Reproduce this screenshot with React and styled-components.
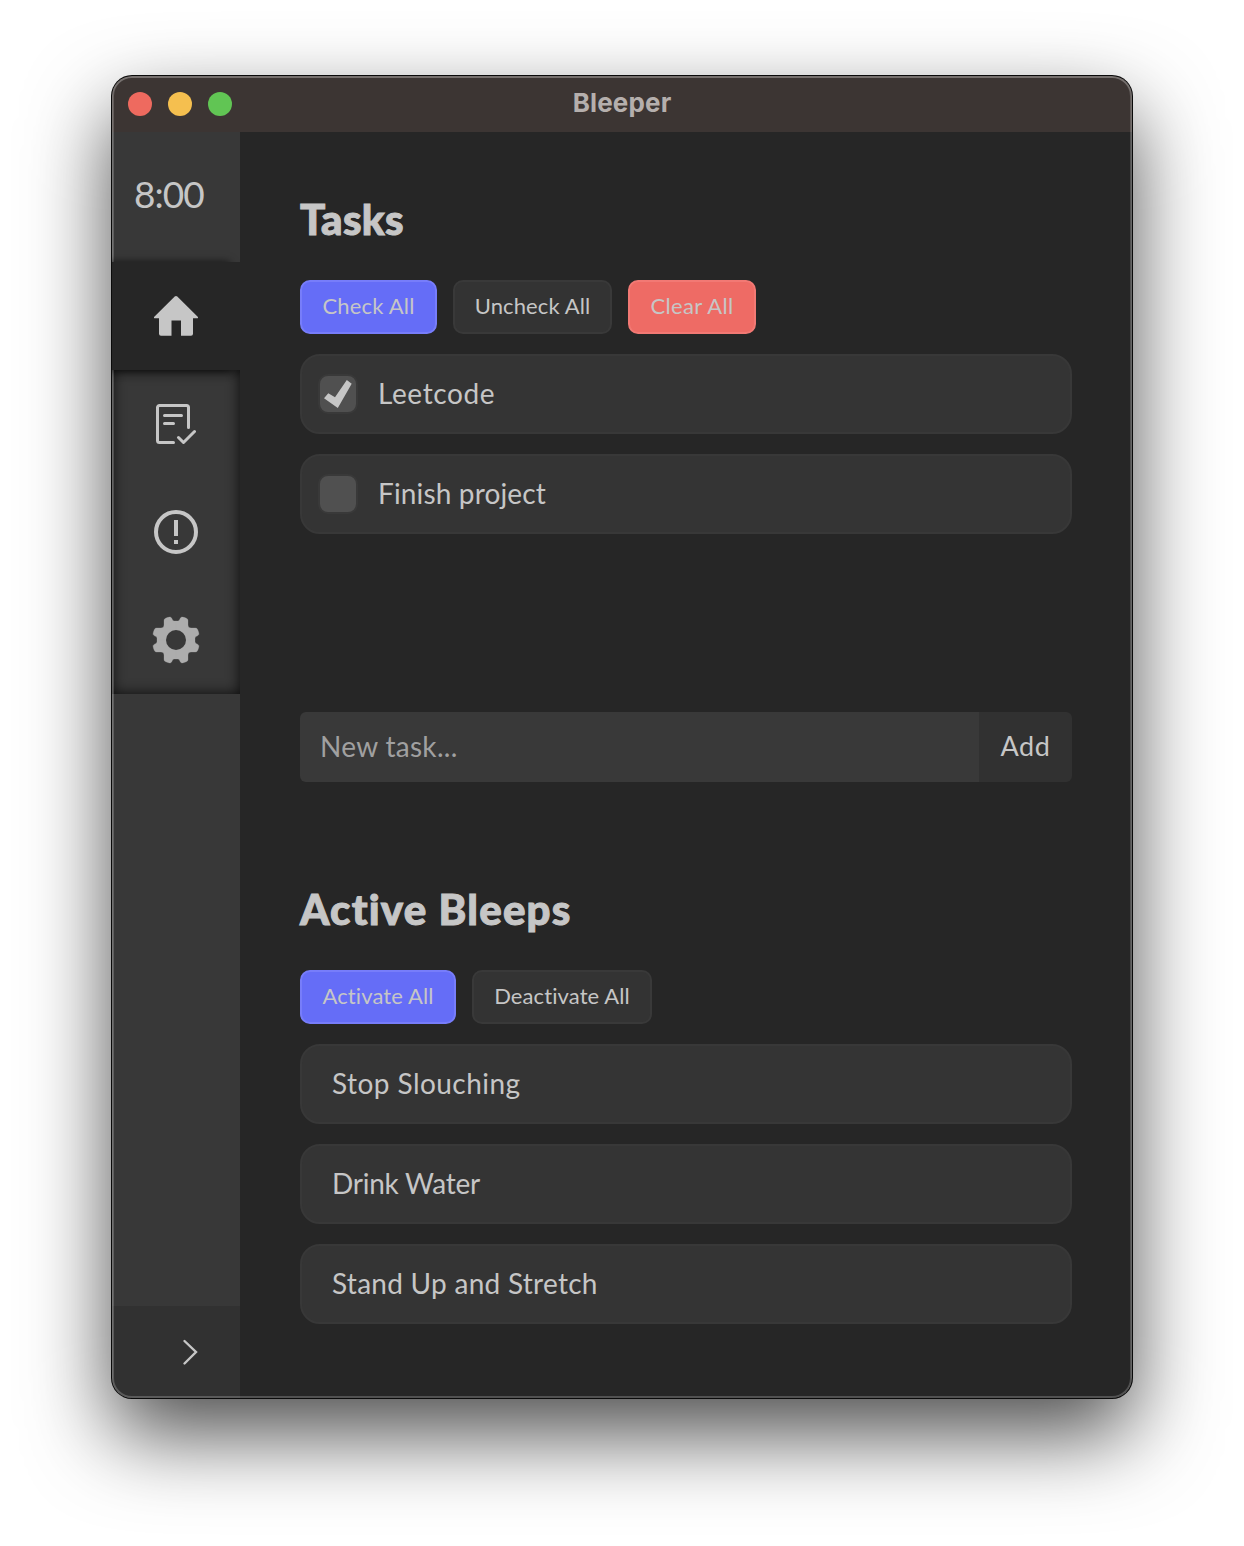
import React from "react";
import styled, { createGlobalStyle, css } from "styled-components";

const GlobalStyle = createGlobalStyle`
  * { box-sizing: border-box; }
  body { margin: 0; background: #fff; font-variant-ligatures: none; }
  button, input { font-family: inherit; font-variant-ligatures: none; }
`;

const Desktop = styled.div`
  width: 1244px;
  height: 1546px;
  padding: 76px 112px 148px;
  overflow: hidden;
  font-family: Lato, "Liberation Sans", sans-serif;
  color: #c6c6c6;
`;

const Window = styled.div`
  position: relative;
  display: flex;
  flex-direction: column;
  height: 1322px;
  border-radius: 20px;
  overflow: hidden;
  background: #262626;
  box-shadow: 0 0 0 1px #0a0a0a, 0 36px 84px rgba(0, 0, 0, 0.7);

  &::after {
    content: "";
    position: absolute;
    inset: 0;
    border-radius: inherit;
    pointer-events: none;
    box-shadow: inset 0 1px 0 1px rgba(255, 255, 255, 0.12),
      inset 0 0 0 2px rgba(255, 255, 255, 0.2);
  }
`;

const TitleBar = styled.header`
  display: grid;
  grid-template-columns: 1fr auto 1fr;
  align-items: center;
  height: 56px;
  padding: 0 16px;
  background: #3c3533;
`;

const Lights = styled.div`
  display: flex;
  gap: 16px;
`;

const Light = styled.span`
  width: 24px;
  height: 24px;
  border-radius: 50%;
  background: ${(p) => p.$color};
`;

const Title = styled.div`
  font: 700 26px/32px Inter, sans-serif;
  letter-spacing: ${(p) => p.$track}px;
  color: #b5afad;
  margin-top: -2px;
`;

const Body = styled.div`
  display: flex;
  flex: 1;
`;

const Sidebar = styled.aside`
  display: flex;
  flex-direction: column;
  width: 128px;
  overflow: hidden;
  background: #383838;
`;

const Clock = styled.div`
  height: 130px;
  padding: 38px 0 0 22px;
  font-size: 37px;
  line-height: 48px;
  letter-spacing: ${(p) => p.$track}px;
`;

const navItem = css`
  display: flex;
  align-items: center;
  justify-content: center;
  width: 128px;
  height: 108px;
  padding: 0;
  border: 0;
  background: none;
`;

const ActiveNavItem = styled.button`
  ${navItem}
  position: relative;
  z-index: 1;
  background: #262626;
  box-shadow: -10px 0 8px rgba(0, 0, 0, 0.65);
`;

const NavItem = styled.button`
  ${navItem}
`;

const NavGroup = styled.nav`
  box-shadow: inset 0 0 14px rgba(0, 0, 0, 0.8);
`;

const Expand = styled.button`
  display: flex;
  align-items: center;
  justify-content: flex-end;
  height: 92px;
  margin-top: auto;
  padding: 0 40px 0 0;
  border: 0;
  background: #313131;
`;

const Icon = styled.svg`
  display: block;
  width: ${(p) => p.$w}px;
  height: ${(p) => p.$h}px;
  color: ${(p) => p.$color || "#c6c6c6"};
`;

const Main = styled.main`
  flex: 1;
  display: flex;
  flex-direction: column;
  gap: 100px;
  padding: 60px 60px 0;
`;

const Section = styled.section`
  display: flex;
  flex-direction: column;
  height: ${(p) => (p.$height ? `${p.$height}px` : "auto")};
`;

const Heading = styled.h1`
  margin: 0;
  height: 88px;
  font-size: 42px;
  font-weight: 900;
  line-height: 54px;
  letter-spacing: ${(p) => p.$track}px;
  -webkit-text-stroke: 1px currentColor;
  white-space: nowrap;
`;

const Actions = styled.div`
  display: flex;
  gap: 16px;
  margin-bottom: 20px;
`;

const tones = {
  primary: ["#656df7", "#777dfa"],
  plain: ["#333333", "#393939"],
  danger: ["#ee6b65", "#f27974"],
};

const ActionButton = styled.button`
  width: ${(p) => p.$width}px;
  height: 54px;
  padding: 0 0 2px;
  border: 2px solid ${(p) => tones[p.$tone][1]};
  border-radius: 10px;
  background: ${(p) => tones[p.$tone][0]};
  color: #c6c6c6;
  font-size: 22px;
  line-height: 28px;
  letter-spacing: ${(p) => p.$track}px;
  white-space: nowrap;
`;

const List = styled.div`
  display: flex;
  flex-direction: column;
  gap: 20px;
`;

const Row = styled.div`
  display: flex;
  align-items: center;
  gap: 20px;
  height: 80px;
  padding-left: ${(p) => (p.$checkable ? 16 : 30)}px;
  border: 2px solid #383838;
  border-radius: 20px;
  background: #343434;
`;

const Label = styled.span`
  font-size: 28px;
  line-height: 36px;
  letter-spacing: ${(p) => p.$track}px;
  margin-bottom: 2px;
`;

const Checkbox = styled.span`
  width: 40px;
  height: 40px;
  border: 2px solid #393939;
  border-radius: 10px;
  background: #505050;
`;

const NewTask = styled.form`
  display: flex;
  height: 70px;
  margin-top: auto;
`;

const TaskInput = styled.input`
  width: 679px;
  padding: 0 20px 2px;
  border: 0;
  border-radius: 6px 0 0 6px;
  background: #393939;
  font-size: 28px;
  letter-spacing: ${(p) => p.$track}px;
  outline: none;

  &::placeholder {
    color: #a0a0a0;
    opacity: 1;
  }
`;

const AddButton = styled.button`
  flex: 1;
  padding: 0 0 3px;
  border: 0;
  border-radius: 0 6px 6px 0;
  background: #313131;
  color: #c6c6c6;
  font-size: 27px;
  letter-spacing: ${(p) => p.$track}px;
`;

const HomeIcon = () => (
  <Icon $w={44} $h={40} viewBox="0 0 44 40">
    <path
      fill="currentColor"
      d="M20.7.6a2 2 0 0 1 2.6 0L43.7 20.8c.6.6.3 1.5-.5 1.5H39v15.400a2 2 0 0 1-2 2H27V24.500H17.500V39.700H7a2 2 0 0 1-2-2V22.300H.8c-.8 0-1.100-.9-.5-1.500z"
    />
  </Icon>
);

const TasksIcon = () => (
  <Icon
    $w={40}
    $h={40}
    viewBox="0 0 40 40"
    fill="none"
    stroke="currentColor"
    strokeWidth="3"
    strokeLinecap="round"
    strokeLinejoin="round"
  >
    <path d="M32.500 23.500V3.500a2 2 0 0 0-2-2h-27a2 2 0 0 0-2 2v33a2 2 0 0 0 2 2h14" />
    <path d="M8.500 11.500h17M8.500 19.500h9M22.500 33.500l5 5L38.500 27.500" />
  </Icon>
);

const AlertIcon = () => (
  <Icon $w={44} $h={44} viewBox="0 0 44 44">
    <circle cx="22" cy="22" r="20" fill="none" stroke="currentColor" strokeWidth="4" />
    <path fill="currentColor" d="M20 10h4v16h-4zM20 30h4v4h-4z" />
  </Icon>
);

const gearQuarter =
  "M0 0V-19H1.800Q3 -19.200 3.400 -20L4.400 -21.900Q5.200 -23.200 6.700 -22.900Q9 -22.400 10.800 -21.500Q12 -20.800 12 -19.500V-15Q12 -12 15 -12H19.500Q20.800 -12 21.500 -10.800Q22.400 -9 22.900 -6.700Q23.200 -5.200 21.900 -4.400L20 -3.400Q19.200 -3 19 -1.800V0Z";

const GearIcon = () => (
  <Icon $w={48} $h={48} $color="#adadad" viewBox="-24 -24 48 48">
    <mask id="gear-hole">
      <rect x="-24" y="-24" width="48" height="48" fill="#fff" />
      <circle r="10" fill="#000" />
    </mask>
    <g fill="currentColor" stroke="currentColor" strokeWidth="0.3" mask="url(#gear-hole)">
      {[0, 90, 180, 270].map((a) => (
        <path key={a} d={gearQuarter} transform={`rotate(${a})`} />
      ))}
    </g>
  </Icon>
);

const ChevronIcon = () => (
  <Icon $w={20} $h={28} viewBox="0 0 20 28">
    <path
      d="M4.500 3L16 14 4.500 25.500"
      fill="none"
      stroke="currentColor"
      strokeWidth="2.400"
      strokeLinecap="round"
    />
  </Icon>
);

const CheckMark = () => (
  <Icon $w={36} $h={36} viewBox="0 0 36 36">
    <path fill="currentColor" d="M4 22.300L8.300 17.200 15 21.300 26.800 4 31.700 7.700 17.800 32z" />
  </Icon>
);

const tasks = [
  { name: "Leetcode", done: true, track: 0.6 },
  { name: "Finish project", done: false, track: 0.15 },
];

const bleeps = [
  { name: "Stop Slouching", track: 0.45 },
  { name: "Drink Water", track: -0.25 },
  { name: "Stand Up and Stretch", track: 0.27 },
];

export default function App() {
  return (
    <Desktop>
      <GlobalStyle />
      <Window>
        <TitleBar>
          <Lights>
            <Light $color="#ee6a5f" />
            <Light $color="#f5bf4f" />
            <Light $color="#61c554" />
          </Lights>
          <Title $track={0.15}>Bleeper</Title>
        </TitleBar>
        <Body>
          <Sidebar>
            <Clock $track={-1}>8:00</Clock>
            <ActiveNavItem><HomeIcon /></ActiveNavItem>
            <NavGroup>
              <NavItem><TasksIcon /></NavItem>
              <NavItem><AlertIcon /></NavItem>
              <NavItem><GearIcon /></NavItem>
            </NavGroup>
            <Expand><ChevronIcon /></Expand>
          </Sidebar>
          <Main>
            <Section $height={590}>
              <Heading $track={0.3}>Tasks</Heading>
              <Actions>
                <ActionButton $tone="primary" $width={137} $track={0.2}>Check All</ActionButton>
                <ActionButton $tone="plain" $width={159} $track={0.1}>Uncheck All</ActionButton>
                <ActionButton $tone="danger" $width={128} $track={0.3}>Clear All</ActionButton>
              </Actions>
              <List>
                {tasks.map((t) => (
                  <Row key={t.name} $checkable>
                    <Checkbox>{t.done && <CheckMark />}</Checkbox>
                    <Label $track={t.track}>{t.name}</Label>
                  </Row>
                ))}
              </List>
              <NewTask>
                <TaskInput placeholder="New task..." $track={0.3} />
                <AddButton type="button" $track={0.6}>Add</AddButton>
              </NewTask>
            </Section>
            <Section>
              <Heading $track={1.2}>Active Bleeps</Heading>
              <Actions>
                <ActionButton $tone="primary" $width={156} $track={0.1}>Activate All</ActionButton>
                <ActionButton $tone="plain" $width={180} $track={0.1}>Deactivate All</ActionButton>
              </Actions>
              <List>
                {bleeps.map((b) => (
                  <Row key={b.name}>
                    <Label $track={b.track}>{b.name}</Label>
                  </Row>
                ))}
              </List>
            </Section>
          </Main>
        </Body>
      </Window>
    </Desktop>
  );
}
